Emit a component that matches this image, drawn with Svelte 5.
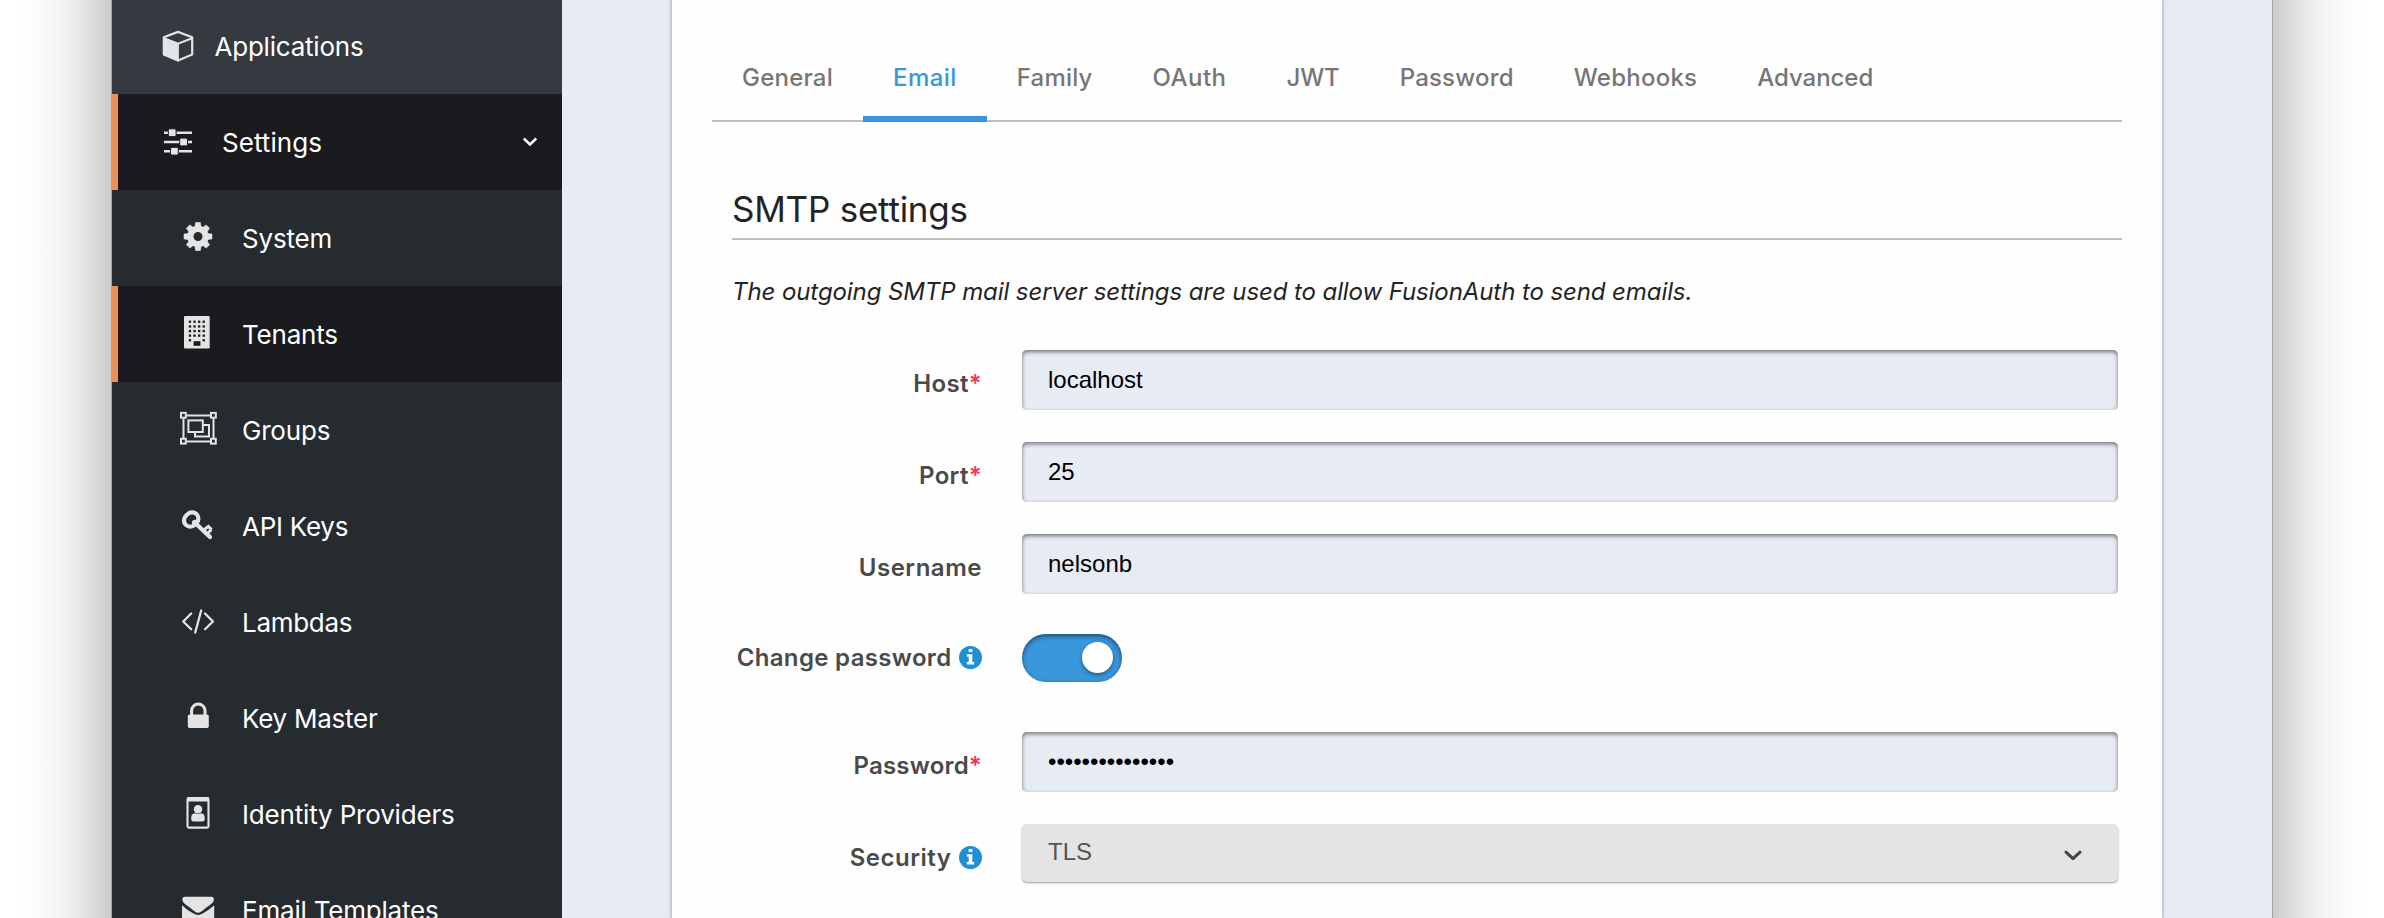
<script>
  const subItems = [
    { id: 'system', label: 'System', sp: -0.18 },
    { id: 'tenants', label: 'Tenants', sp: -0.2, active: true },
    { id: 'groups', label: 'Groups', sp: -0.2 },
    { id: 'keys', label: 'API Keys', sp: -0.27 },
    { id: 'lambdas', label: 'Lambdas', sp: -0.3 },
    { id: 'lock', label: 'Key Master', sp: -0.25 },
    { id: 'idp', label: 'Identity Providers', sp: -0.17 },
    { id: 'mail', label: 'Email Templates', sp: -0.2 }
  ];
  const tabs = [
    { label: 'General', sp: 0.22 },
    { label: 'Email', sp: 0.45 },
    { label: 'Family', sp: 0.2 },
    { label: 'OAuth', sp: 0.45 },
    { label: 'JWT', sp: -0.1 },
    { label: 'Password', sp: 0.2 },
    { label: 'Webhooks', sp: 0.25 },
    { label: 'Advanced', sp: -0.05 }
  ];
  const teeth = [0, 45, 90, 135, 180, 225, 270, 315];
</script>

{#snippet info()}
  <svg class="info" width="23" height="23" viewBox="0 0 22 22">
    <circle cx="11" cy="11" r="11" fill="#2090d3" />
    <path d="M9.2 2.8h3.6v3H9.2zM7.5 7.8h5.3v7.4h1.7v2.6h-7v-2.6h1.8v-4.8H7.5z" fill="#fff" />
  </svg>
{/snippet}

{#snippet icon(id)}
  <svg class="icon" width="40" height="40" viewBox="0 0 40 40" fill="#e4e4e4">
    {#if id === 'box'}
      <path d="M20 5.9 34.2 11.2V28.6L20 34.6 5.8 28.6V11.2Z" fill="none" stroke="#e4e4e4" stroke-width="2.2" stroke-linejoin="round" />
      <path d="M5.3 12 20 17.6 34.7 12" fill="none" stroke="#e4e4e4" stroke-width="2" />
      <path d="M5.3 11.5 20.9 17.6V35.5L5.3 29Z" />
    {:else if id === 'sliders'}
      <path d="M6 9.4h28v2.6H6zM6 18.7h28v2.6H6zM6 27.9h28v2.6H6z" />
      <g stroke="#1b1b1f" stroke-width="1">
        <rect x="10.3" y="6.8" width="7.8" height="7.8" rx="1.5" />
        <rect x="21.7" y="16.1" width="7.8" height="7.8" rx="1.5" />
        <rect x="12.5" y="25.3" width="7.8" height="7.8" rx="1.5" />
      </g>
    {:else if id === 'system'}
      <g transform="translate(20 20.5)">
        {#each teeth as a}
          <path d="M-3.3-8 -2.4-14H2.4L3.3-8Z" stroke="#e4e4e4" stroke-width=".6" stroke-linejoin="round" transform="rotate({a})" />
        {/each}
        <circle r="7.6" fill="none" stroke="#e4e4e4" stroke-width="6.2" />
      </g>
    {:else if id === 'tenants'}
      <rect x="6" y="3.9" width="25.7" height="32.6" rx="1.2" />
      <g fill="#1b1b1f">
        {#each [8.6, 13.3, 17.9, 22.5, 27.1] as y, r}
          {#each [10.8, 15.4, 20, 24.6] as x, c}
            {#if r < 4 || c === 0 || c === 3}
              <rect {x} {y} width="2.3" height="2.3" />
            {/if}
          {/each}
        {/each}
        <rect x="15.6" y="29.2" width="6.8" height="4.6" />
      </g>
    {:else if id === 'groups'}
      <g fill="none" stroke="#e4e4e4" stroke-width="2" transform="translate(0 .6)">
        <path d="M8.5 7h24M8.5 33h24M5.5 10v20M35.5 10v20" />
        <rect x="3" y="4.3" width="4.8" height="4.8" />
        <rect x="33" y="4.3" width="4.8" height="4.8" />
        <rect x="3" y="30.2" width="4.8" height="4.8" />
        <rect x="33" y="30.2" width="4.8" height="4.8" />
        <rect x="10.4" y="11.8" width="14.4" height="11.6" />
        <path d="M24.8 16.4h6.2v11.6H17v-4.6" />
      </g>
    {:else if id === 'keys'}
      <g fill="none" stroke="#e4e4e4" transform="translate(0 1)">
        <rect x="-7.6" y="-6.3" width="15.2" height="12.6" rx="6.3" stroke-width="4.2" transform="translate(13.2 14.5) rotate(-45)" />
        <circle cx="17.2" cy="18" r="1.6" stroke-width="3.4" />
        <path d="M17.5 18.2 32 32" stroke-width="4.2" stroke-linecap="round" />
        <path d="M25.5 25.6 30 21.3M29 28.800 33.4 24.6M29.5 20.5 33.6 24.6" stroke-width="3" />
      </g>
    {:else if id === 'lambdas'}
      <g fill="none" stroke="#e4e4e4" stroke-width="2.3" stroke-linecap="round" stroke-linejoin="round" transform="translate(0 1.2)">
        <path d="M13.2 12.3 5.2 20.3 13.2 28.1M27 12.3 35 20.3 27 28.1M23.2 9.3 17.2 31.3" />
      </g>
    {:else if id === 'lock'}
      <g transform="translate(0 1)">
        <rect x="9.8" y="17.4" width="21" height="13.7" rx="1.8" />
        <path d="M13.6 18v-4.2a6.7 6.7 0 0 1 13.4 0V18" fill="none" stroke="#e4e4e4" stroke-width="3" />
      </g>
    {:else if id === 'idp'}
      <g transform="translate(-.5 .4)">
        <rect x="10" y="5.6" width="21" height="29.6" rx="1.4" fill="none" stroke="#e4e4e4" stroke-width="2.1" />
        <path d="M10 4.5h8v2.2h4.6V4.5H31V9H10z" />
        <circle cx="20.5" cy="16.8" r="4.2" />
        <path d="M17.4 20.8q3.1 1.6 6.2 0 3.6.4 3.6 4.6v1.8q0 1.800-1.800 1.800h-9.900q-1.800 0-1.800-1.800v-1.800q0-4.200 3.700-4.600z" />
      </g>
    {:else if id === 'mail'}
      <g transform="translate(0 3.2)">
        <path d="M4.3 8.2q0-2.7 2.8-2.7h26q2.8 0 2.8 2.7c0 2.6-2.6 4.6-4.6 6-7.6 5.3-9 7.3-11.2 7.3s-3.6-2-11.2-7.3c-2-1.4-4.6-3.4-4.6-6z" />
        <path d="M4 14c3 3 12.5 9.800 16.100 9.800S33 17 36.200 14V34H4z" />
      </g>
    {/if}
  </svg>
{/snippet}

<div class="page">
  <div class="gutter left"></div>
  <div class="window">
    <nav>
      <a class="row top">{@render icon('box')}<span>Applications</span></a>
      <a class="row settings active">
        {@render icon('sliders')}<span>Settings</span>
        <svg class="chev" width="16" height="10" viewBox="0 0 16 10"><path d="M1.8 1.5 8 7.5 14.2 1.5" fill="none" stroke="#fff" stroke-width="2.5" /></svg>
      </a>
      {#each subItems as it}
        <a class="row sub" class:active={it.active}>{@render icon(it.id)}<span style="letter-spacing:{it.sp}px">{it.label}</span></a>
      {/each}
    </nav>
    <main>
      <section class="panel">
        <div class="tabs">
          {#each tabs as t}
            <a class="tab" class:current={t.label === 'Email'} style="letter-spacing:{t.sp}px">{t.label}</a>
          {/each}
        </div>
        <form>
          <h2>SMTP settings</h2>
          <p><em>The outgoing SMTP mail server settings are used to allow FusionAuth to send emails.</em></p>
          <div class="field"><label class="mid">Host<b>*</b></label><div class="input">localhost</div></div>
          <div class="field"><label class="mid">Port<b>*</b></label><div class="input">25</div></div>
          <div class="field"><label class="wide">Username</label><div class="input">nelsonb</div></div>
          <div class="field switch"><label class="mid">Change password{@render info()}</label><div class="toggle"><i></i></div></div>
          <div class="field"><label>Password<b>*</b></label><div class="input">•••••••••••••••</div></div>
          <div class="field">
            <label class="wide">Security{@render info()}</label>
            <div class="select">
              <span>TLS</span>
              <svg width="18" height="12" viewBox="0 0 18 12"><path d="M2 2.2 9 8.7 16 2.2" fill="none" stroke="#444" stroke-width="3" stroke-linecap="round" stroke-linejoin="round" /></svg>
            </div>
          </div>
        </form>
      </section>
    </main>
  </div>
  <div class="gutter right"></div>
</div>

<style>
  :global(body) { margin: 0; background: #fff; }
  .page {
    display: grid;
    grid-template-columns: 112px 2160px 112px;
    width: 2384px;
    height: 918px;
    overflow: hidden;
    font-family: Inter, 'Liberation Sans', sans-serif;
  }
  .gutter {
    box-sizing: border-box;
    border-right: 1px solid #a4a4a4;
    background: linear-gradient(to right, #fff 12%, #fcfcfc 35%, #f2f2f2 58%, #e5e5e5 75%, #d6d6d6 90%, #cccccc);
  }
  .gutter.right { transform: scaleX(-1); }
  .window { display: flex; height: 918px; overflow: hidden; }
  nav { width: 450px; flex: none; background: #262b2f; margin-top: -2px; }
  .row {
    display: flex;
    align-items: center;
    box-sizing: border-box;
    height: 96px;
    padding-left: 46px;
    border-left: 0 solid #ed9157;
    color: #fff;
    font-size: 26px;
    line-height: 32px;
    white-space: nowrap;
  }
  .row span { padding-top: 1px; }
  .icon { flex: none; }
  .top { background: #353940; gap: 17px; letter-spacing: -0.22px; }
  .top.row { padding-left: 45.5px; }
  .active { background: #1b1b1f; border-left-width: 6px; }
  .settings { padding-left: 40px; padding-right: 24px; gap: 24px; letter-spacing: 0.05px; }
  .chev { margin-left: auto; }
  .sub { padding-left: 66px; gap: 24px; }
  .sub.active { padding-left: 60px; }
  .sub .icon { position: relative; top: -2px; }
  main { width: 1710px; background: #e7ebf3; display: flex; padding-left: 110px; box-sizing: border-box; }
  .panel {
    width: 1490px;
    box-sizing: border-box;
    background: #fefefe;
    padding: 34px 40px 0;
    box-shadow: 0 0 3px 1px rgba(0, 0, 0, 0.25);
  }
  .tabs { display: flex; height: 86px; border-bottom: 2px solid #bfbfbf; }
  .tab {
    box-sizing: border-box;
    height: 88px;
    padding: 29px 30px 0;
    line-height: 29px;
    font-size: 24px;
    font-weight: 500;
    color: #767676;
    border-bottom: 6px solid transparent;
  }
  .current { color: #3997dc; border-color: #3997dc; }
  form { padding-left: 20px; }
  h2 {
    margin: 64px 0 0;
    height: 52px;
    line-height: 46px;
    border-bottom: 2px solid #bfbfbf;
    font-size: 35px;
    font-weight: 400;
    letter-spacing: -0.24px;
    color: #242424;
  }
  p {
    margin: 37px 0 44px;
    height: 29px;
    line-height: 29px;
    font-size: 24px;
    letter-spacing: -0.09px;
    color: #242424;
    white-space: nowrap;
  }
  .field { display: flex; height: 60px; margin-bottom: 32px; align-items: flex-start; }
  label {
    display: flex;
    justify-content: flex-end;
    align-items: center;
    width: 250px;
    margin-right: 40px;
    padding-top: 19px;
    height: 29px;
    font-size: 24px;
    font-weight: 600;
    letter-spacing: 0.2px;
    color: #4a4a4a;
    white-space: nowrap;
  }
  .wide { letter-spacing: 0.52px; }
  .mid { letter-spacing: 0.33px; }
  label b { color: #ee3c55; font-weight: 600; }
  .info { margin-left: 7.5px; }
  .input, .select {
    width: 1096px;
    height: 60px;
    box-sizing: border-box;
    padding: 0 26px;
    border-radius: 5px;
    background: #e7ebf3;
    box-shadow: inset 0 2px 4px rgba(0, 0, 0, 0.5), inset 0 0 1px rgba(0, 0, 0, 0.1);
    font: 24px/59px 'Liberation Sans', Arial, sans-serif;
    color: #000;
  }
  .select {
    display: flex;
    justify-content: space-between;
    align-items: center;
    height: 58px;
    padding-right: 36px;
    background: #e4e4e4;
    color: #555;
    box-shadow: 0 1px 2px rgba(0, 0, 0, 0.4);
  }
  .select span { margin-top: -3px; }
  .select svg { margin-top: 6px; }
  .switch { height: 48px; margin: 40px 0 50px; }
  .switch label { padding-top: 9px; }
  .toggle {
    width: 100px;
    height: 48px;
    border-radius: 24px;
    background: #3997dc;
    box-shadow: inset 0 2px 5px rgba(0, 0, 0, 0.5);
    display: flex;
    justify-content: flex-end;
    align-items: flex-start;
    box-sizing: border-box;
    padding: 8px 9px;
  }
  .toggle i { width: 31px; height: 31px; border-radius: 50%; background: #fff; box-shadow: 0 2px 4px rgba(0, 0, 0, 0.4); }
</style>
